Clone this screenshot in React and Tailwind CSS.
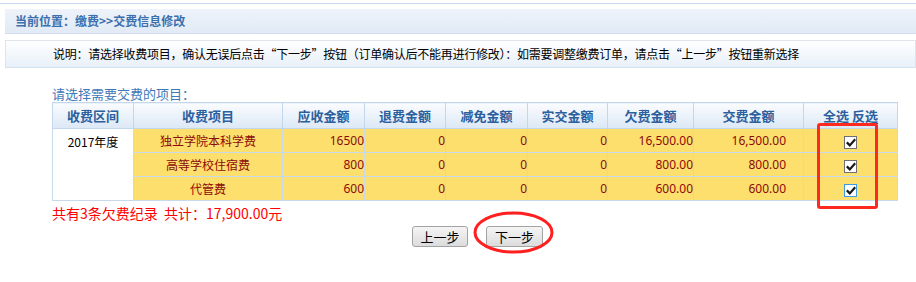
import React from "react";

const rows = [
  { name: "独立学院本科学费", ys: "16500", tf: "0", jm: "0", sj: "0", qf: "16,500.00", jf: "16,500.00", focus: false },
  { name: "高等学校住宿费", ys: "800", tf: "0", jm: "0", sj: "0", qf: "800.00", jf: "800.00", focus: false },
  { name: "代管费", ys: "600", tf: "0", jm: "0", sj: "0", qf: "600.00", jf: "600.00", focus: true },
];

function Check({ focus }) {
  return (
    <span
      className={
        "inline-flex w-[13px] h-[13px] bg-white border items-center justify-center align-middle " +
        (focus ? "border-[#3c9be0]" : "border-[#707070]")
      }
    >
      <svg width="10" height="9" viewBox="0 0 10 9">
        <path d="M0.8 4.4 L3.8 7.4 L9.2 1.2" fill="none" stroke="#1a1a1a" strokeWidth="2.2" />
      </svg>
    </span>
  );
}

export default function App() {
  const th =
    "border border-[#c3d6ec] bg-gradient-to-b from-[#fafcfe] to-[#dce8f6] text-[13px] font-bold text-[#2b5f9e] text-center p-0 h-[26px]";
  const td = "border border-[#c9d9ec] bg-[#fddf6e] text-[12px] text-[#8b0a0a] p-0 h-[24px]";
  const num = " text-right font-['Noto_Sans','Noto_Sans_CJK_SC',sans-serif]";
  return (
    <div className="relative w-[916px] h-[282px] bg-white overflow-hidden font-['Noto_Sans_CJK_SC','Noto_Sans',sans-serif]">
      <div className="h-[3px]" />
      <div className="h-[1px] bg-[#c6d9ee]" />
      <div className="h-[5px]" />
      <div className="ml-[5px] h-[25px] bg-gradient-to-b from-[#eef3fa] to-[#e1eaf5] border-b border-[#d0deed] flex items-center pl-[10px] text-[12px] font-bold text-[#3b6fae]">
        当前位置：缴费&gt;&gt;交费信息修改
      </div>
      <div className="h-[6px]" />
      <div className="ml-[5px] h-[28px] border border-[#dde4ec] border-b-[#d3e0ee] bg-gradient-to-b from-white to-[#e8f0f9] flex items-center pl-[47px] text-[12px] tracking-[-0.25px] text-black">
        说明：请选择收费项目，确认无误后点击“下一步”按钮（订单确认后不能再进行修改）：如需要调整缴费订单，请点击“上一步”按钮重新选择
      </div>
      <div className="ml-[52px] mt-[18px] text-[13px] leading-[16px] text-[#3f78b8]">请选择需要交费的项目：</div>
      <table className="ml-[52px] border-collapse table-fixed w-[845px]">
        <colgroup>
          <col className="w-[81px]" />
          <col className="w-[149px]" />
          <col className="w-[82px]" />
          <col className="w-[81px]" />
          <col className="w-[82px]" />
          <col className="w-[80px]" />
          <col className="w-[86px]" />
          <col className="w-[110px]" />
          <col className="w-[94px]" />
        </colgroup>
        <thead>
          <tr>
            <th className={th}>收费区间</th>
            <th className={th}>收费项目</th>
            <th className={th}>应收金额</th>
            <th className={th}>退费金额</th>
            <th className={th}>减免金额</th>
            <th className={th}>实交金额</th>
            <th className={th}>欠费金额</th>
            <th className={th}>交费金额</th>
            <th className={th}>
              <span className="underline underline-offset-2">全选</span>{" "}
              <span className="underline underline-offset-2">反选</span>
            </th>
          </tr>
        </thead>
        <tbody>
          {rows.map((r, i) => (
            <tr key={i}>
              {i === 0 && (
                <td rowSpan={3} className="border border-[#c9d9ec] bg-white text-[12px] text-black text-center align-top pt-[4px]">
                  2017年度
                </td>
              )}
              <td className={td + " text-center"}>{r.name}</td>
              <td className={td + num}>{r.ys}</td>
              <td className={td + num}>{r.tf}</td>
              <td className={td + num}>{r.jm}</td>
              <td className={td + num}>{r.sj}</td>
              <td className={td + num}>{r.qf}</td>
              <td className={td + num + " pr-[17px]"}>{r.jf}</td>
              <td className={td + " text-center"}>
                <Check focus={r.focus} />
              </td>
            </tr>
          ))}
        </tbody>
      </table>
      <div className="ml-[52px] mt-[3px] text-[14px] leading-[18px] text-[#ff0000] whitespace-pre">共有3条欠费纪录  共计：17,900.00元</div>
      <div className="ml-[52px] w-[845px] mt-[4px] flex justify-center gap-[18px] pl-[6px]">
        <button className="w-[56px] h-[21px] border border-[#a3a3a3] rounded-[3px] bg-gradient-to-b from-[#f5f5f5] to-[#dcdcdc] text-[13px] leading-none text-black">
          上一步
        </button>
        <button className="w-[57px] h-[21px] border border-[#a3a3a3] rounded-[3px] bg-gradient-to-b from-[#f5f5f5] to-[#dcdcdc] text-[13px] leading-none text-black">
          下一步
        </button>
      </div>
      <div className="absolute left-[817px] top-[123px] w-[61px] h-[86px] border-[3px] border-[#ff2a1f] rounded-[3px]" />
      <svg className="absolute left-[473px] top-[211px]" width="82" height="44" viewBox="0 0 82 44">
        <ellipse cx="40.5" cy="21.5" rx="38.5" ry="19.5" fill="none" stroke="#ff1f1f" strokeWidth="3" />
      </svg>
    </div>
  );
}
